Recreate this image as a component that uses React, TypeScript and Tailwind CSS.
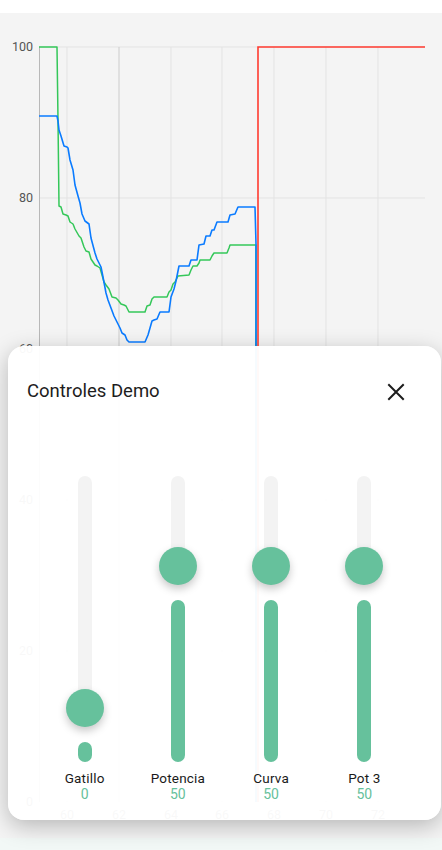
import React from "react";

const blue =
  "39,116 57,116 58,121 59,130 61,136 64,146 67,147 68,148 70,160 73,170 75,185 78,196 80,203 82,214 85,221 89,224 91,238 95,253 97,259 101,267 103,277 106,293 108,300 111,308 114,316 117,322 120,328 122,333 125,335 127,340 129,342 145,342 148,335 152,321 154,320 157,319 160,312 169,312 171,297 174,289 176,281 179,266 189,266 191,260 197,260 199,245 204,244 206,236 210,236 212,230 214,230 217,222 228,222 230,215 235,214 238,207 255,207 256,244 256,802";
const green =
  "39,47 57,47 58,120 59,206 61,207 63,214 66,215 68,216 70,222 73,224 75,229 79,236 81,238 84,247 86,251 89,252 91,259 95,265 97,266 100,268 102,275 104,282 106,285 109,289 112,297 116,298 118,300 121,304 124,305 126,306 129,312 145,312 147,306 150,305 152,299 154,297 167,297 169,292 171,290 173,284 175,282 178,276 189,275 191,270 193,266 197,266 199,263 200,260 210,260 212,256 214,253 227,253 229,248 230,245 256,245 256,802";
const red = "258,802 258,47 425,47";

const yTicks = [
  { v: "100", y: 47 },
  { v: "80", y: 198 },
  { v: "60", y: 349 },
  { v: "40", y: 500 },
  { v: "20", y: 651 },
  { v: "0", y: 802 },
];
const xTicks = [
  { v: "60", x: 67 },
  { v: "62", x: 119 },
  { v: "64", x: 171 },
  { v: "66", x: 222 },
  { v: "68", x: 274 },
  { v: "70", x: 326 },
  { v: "72", x: 378 },
];

function Chart() {
  return (
    <svg width={442} height={825} viewBox="0 13 442 825" className="block">
      {yTicks.map((t) => (
        <g key={t.v}>
          <line x1={39} x2={425} y1={t.y} y2={t.y} stroke="#e3e3e3" strokeWidth={1} />
          <text
            x={33}
            y={t.y + 4}
            textAnchor="end"
            fontSize={12.5}
            fill="#555"
            fontFamily="Roboto, sans-serif"
          >
            {t.v}
          </text>
        </g>
      ))}
      {xTicks.map((t) => (
        <g key={t.v}>
          <line
            x1={t.x}
            x2={t.x}
            y1={47}
            y2={802}
            stroke={t.x === 119 ? "#cccccc" : "#e3e3e3"}
            strokeWidth={1}
          />
          <text
            x={t.x}
            y={819}
            textAnchor="middle"
            fontSize={12.5}
            fill="#555"
            fontFamily="Roboto, sans-serif"
          >
            {t.v}
          </text>
        </g>
      ))}
      <line x1={39.5} x2={39.5} y1={47} y2={802} stroke="#b8b8b8" strokeWidth={1} />
      <polyline points={green} fill="none" stroke="#34c759" strokeWidth={1.5} strokeLinejoin="round" />
      <polyline points={blue} fill="none" stroke="#0a7bff" strokeWidth={1.6} strokeLinejoin="round" />
      <polyline points={red} fill="none" stroke="#ff3b30" strokeWidth={1.6} />
    </svg>
  );
}

function VSlider({ label, value, thumb }: { label: string; value: string; thumb: number }) {
  return (
    <div className="flex flex-col items-center">
      <div className="relative h-[286px] w-[40px]">
        <div
          className="absolute left-[13px] w-[14px] top-0 rounded-full bg-[#f3f3f3]"
          style={{ height: thumb }}
        />
        <div
          className="absolute left-[13px] w-[14px] bottom-0 rounded-full bg-[#66c19c]"
          style={{ top: thumb + 34 }}
        />
        <div
          className="absolute left-[1px] h-[38px] w-[38px] rounded-full bg-[#66c19c] shadow-[0_4px_8px_rgba(0,0,0,0.22)]"
          style={{ top: thumb - 19 }}
        />
      </div>
      <div className="mt-[8px] h-[16px] leading-[16px] text-[13.5px] font-normal tracking-[0.2px] text-[#1a1a1a] font-['Roboto',sans-serif]">
        {label}
      </div>
      <div className="h-[16px] leading-[16px] text-[14px] text-[#66c19c] font-['Roboto',sans-serif]">
        {value}
      </div>
    </div>
  );
}

export default function App() {
  return (
    <div className="relative h-[850px] w-[442px] overflow-hidden bg-white font-['Roboto',sans-serif]">
      <div className="flex h-full flex-col">
        <div className="h-[13px] bg-white" />
        <div className="h-[825px] bg-[#f4f4f4]">
          <Chart />
        </div>
        <div className="flex-1 bg-[#f2f8f6]" />
      </div>

      <div className="absolute left-[8px] right-[1px] top-[346px] bottom-[30px] rounded-[16px] bg-white/[0.96] shadow-[0_6px_22px_rgba(0,0,0,0.25)]">
        <div className="mt-[34px] flex h-[24px] items-center justify-between pl-[19px] pr-[36px]">
          <span className="text-[18.5px] text-[#1d1d1d]">Controles Demo</span>
          <svg width={18} height={18} viewBox="0 0 18 18">
            <path d="M2 2 L16 16 M16 2 L2 16" stroke="#1d1d1d" strokeWidth={2} strokeLinecap="square" />
          </svg>
        </div>
        <div className="mt-[72px] grid grid-cols-4 px-[30px]">
          <VSlider label="Gatillo" value="0" thumb={232} />
          <VSlider label="Potencia" value="50" thumb={90} />
          <VSlider label="Curva" value="50" thumb={90} />
          <VSlider label="Pot 3" value="50" thumb={90} />
        </div>
      </div>
    </div>
  );
}
